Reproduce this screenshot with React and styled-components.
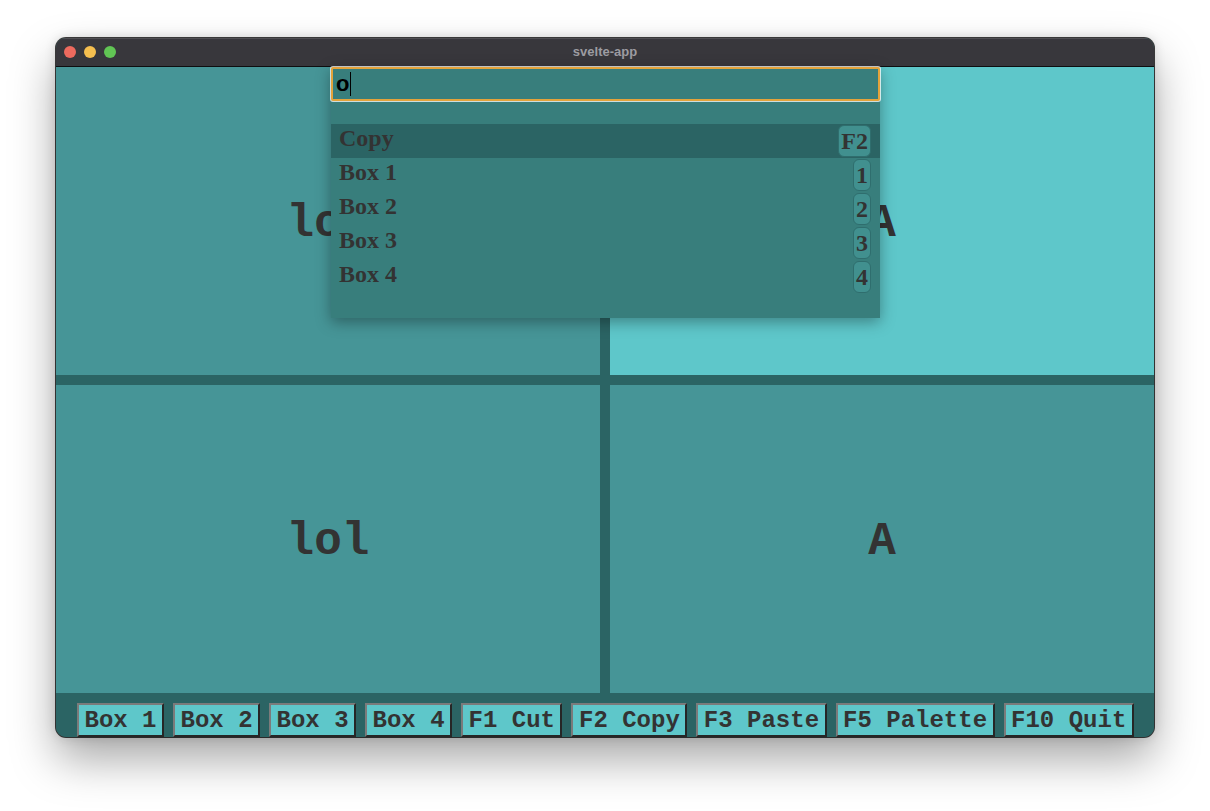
import React from 'react';
import styled, { createGlobalStyle } from 'styled-components';

const panes = [
  { label: 'lol', active: false },
  { label: 'A', active: true },
  { label: 'lol', active: false },
  { label: 'A', active: false },
];

const commands = [
  { name: 'Copy', key: 'F2', selected: true },
  { name: 'Box 1', key: '1' },
  { name: 'Box 2', key: '2' },
  { name: 'Box 3', key: '3' },
  { name: 'Box 4', key: '4' },
];

const buttons = [
  'Box 1',
  'Box 2',
  'Box 3',
  'Box 4',
  'F1 Cut',
  'F2 Copy',
  'F3 Paste',
  'F5 Palette',
  'F10 Quit',
];

const GlobalStyle = createGlobalStyle`
  html, body {
    margin: 0;
    padding: 0;
    background: #ffffff;
  }
  * {
    box-sizing: border-box;
  }
`;

const Page = styled.div`
  width: 1210px;
  height: 811px;
  padding: 38px 56px 0;
  overflow: hidden;
`;

const Window = styled.div`
  position: relative;
  width: 1098px;
  height: 699px;
  display: flex;
  flex-direction: column;
  border-radius: 10px;
  overflow: hidden;
  background: #2b6464;
  box-shadow: 0 0 0 1px rgba(0, 0, 0, 0.75), 0 22px 45px rgba(0, 0, 0, 0.35),
    0 0 12px rgba(0, 0, 0, 0.15);
`;

const TitleBar = styled.div`
  position: relative;
  height: 29px;
  flex: none;
  display: flex;
  align-items: center;
  justify-content: center;
  background: #38373c;
  border-bottom: 1px solid #0e0e10;
  box-shadow: inset 0 1px 0 rgba(255, 255, 255, 0.12);
`;

const Lights = styled.div`
  position: absolute;
  left: 8px;
  top: 8px;
  display: flex;
  gap: 8px;
`;

const Light = styled.span`
  width: 12px;
  height: 12px;
  border-radius: 50%;
  background: ${(p) => p.color};
`;

const Title = styled.span`
  margin-top: -2px;
  font-family: 'Liberation Sans', Arial, sans-serif;
  font-weight: 700;
  font-size: 13px;
  color: #9d9ca1;
`;

const Content = styled.div`
  flex: 1;
  display: flex;
  flex-direction: column;
`;

const Grid = styled.div`
  flex: 1;
  display: grid;
  grid-template-columns: 1fr 1fr;
  grid-template-rows: 1fr 1fr;
  gap: 10px;
  background: #2b6464;
`;

const Pane = styled.div`
  display: flex;
  align-items: center;
  justify-content: center;
  padding-top: 6px;
  background: ${(p) => (p.active ? '#5ec7ca' : '#469597')};
  font-family: 'Liberation Mono', 'Courier New', monospace;
  font-weight: 700;
  font-size: 46px;
  color: #333333;
`;

const BottomBar = styled.div`
  height: 44px;
  flex: none;
  display: flex;
  align-items: flex-start;
  gap: 9px;
  padding: 10px 0 0 21px;
  background: #2b6464;
`;

const KeyButton = styled.button`
  height: 34px;
  padding: 0 5.5px;
  border-style: solid;
  border-width: 2px;
  border-color: #7b7b7b #262626 #262626 #7b7b7b;
  background: #5ec7ca;
  font-family: 'Liberation Mono', 'Courier New', monospace;
  font-weight: 700;
  font-size: 24px;
  line-height: 32px;
  color: #333333;
  white-space: pre;
`;

const Palette = styled.div`
  position: absolute;
  left: 275px;
  top: 29px;
  width: 549px;
  height: 251px;
  display: flex;
  flex-direction: column;
  background: #387e7c;
  box-shadow: 0 4px 14px rgba(0, 0, 0, 0.35);
`;

const SearchBox = styled.div`
  height: 34px;
  display: flex;
  align-items: center;
  padding-left: 3px;
  border: 2px solid #e3a33b;
  border-radius: 2px;
  box-shadow: 0 0 0 1px rgba(255, 255, 255, 0.75);
  background: #387e7c;
  font-family: 'Liberation Sans', Arial, sans-serif;
  font-weight: 700;
  font-size: 22px;
  color: #000000;
`;

const Caret = styled.span`
  width: 1px;
  height: 24px;
  margin-left: 1px;
  background: #000000;
`;

const List = styled.div`
  display: flex;
  flex-direction: column;
  margin-top: 23px;
`;

const Row = styled.div`
  height: 34px;
  display: flex;
  align-items: center;
  justify-content: space-between;
  padding: 0 9px 0 8px;
  background: ${(p) => (p.selected ? '#2b6464' : 'transparent')};
  font-family: 'Liberation Serif', 'Times New Roman', serif;
  font-weight: 700;
  font-size: 24px;
  color: #333333;
`;

const Name = styled.span`
  margin-top: -5px;
`;

const Badge = styled.span`
  height: 32px;
  min-width: 17px;
  display: flex;
  align-items: center;
  justify-content: center;
  padding: 0 2px;
  border: 1px solid #2f6e6e;
  border-radius: 6px;
  background: #41908f;
  line-height: 1;
`;

export default function App() {
  return (
    <Page>
      <GlobalStyle />
      <Window>
        <TitleBar>
          <Lights>
            <Light color="#ed6a5e" />
            <Light color="#f5bf4f" />
            <Light color="#61c554" />
          </Lights>
          <Title>svelte-app</Title>
        </TitleBar>
        <Content>
          <Grid>
            {panes.map((p, i) => (
              <Pane key={i} active={p.active}>
                {p.label}
              </Pane>
            ))}
          </Grid>
          <BottomBar>
            {buttons.map((b) => (
              <KeyButton key={b}>{b}</KeyButton>
            ))}
          </BottomBar>
        </Content>
        <Palette>
          <SearchBox>
            o<Caret />
          </SearchBox>
          <List>
            {commands.map((c) => (
              <Row key={c.name} selected={c.selected}>
                <Name>{c.name}</Name>
                <Badge>{c.key}</Badge>
              </Row>
            ))}
          </List>
        </Palette>
      </Window>
    </Page>
  );
}
